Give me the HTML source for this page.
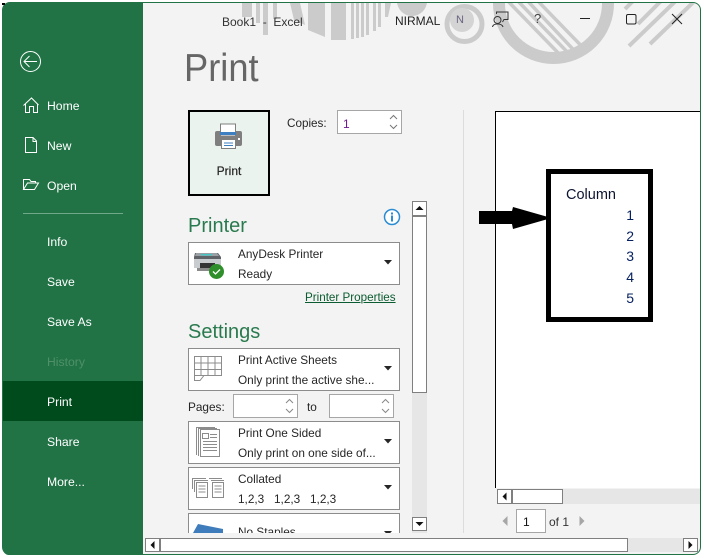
<!DOCTYPE html>
<html><head><meta charset="utf-8"><style>
html,body{margin:0;padding:0;background:#fff}
#w{position:relative;width:704px;height:558px;overflow:hidden;background:#fff;font-family:"Liberation Sans",sans-serif;font-size:11.8px;color:#262626}
#w div,#w svg{position:absolute}
.t{white-space:nowrap;line-height:16px;height:16px}
.n{color:#fff;left:47px;font-size:12.2px}
.dd{left:188px;width:210px;background:#fff;border:1px solid #8c8c8c}
.inp{background:#fff;border:1px solid #a6a6a6;box-sizing:border-box}
.sb{background:#fff;border:1px solid #7f7f7f;box-sizing:border-box}
.h{color:#2a7a4f;font-size:20px;left:188px;line-height:24px;white-space:nowrap}
</style></head><body><div id="w">
<div style="left:2px;top:2px;width:697px;height:551px;background:#f3f3f3;border:1px solid #217346;border-radius:8px;box-sizing:content-box"></div>
<div style="left:2px;top:3px;width:3px;height:2px;background:#000"></div>

<svg width="704" height="558" style="left:0;top:0" fill="none">
<defs><clipPath id="c"><path d="M3 3H692Q699 3 699 10V100H3Z"/></clipPath>
<clipPath id="i"><circle cx="553.5" cy="3.5" r="49"/></clipPath></defs>
<g clip-path="url(#c)" fill="#cbcbcb">
<rect x="242" y="3" width="10" height="14"/><rect x="256" y="3" width="4" height="20"/><rect x="263" y="3" width="5" height="32"/><rect x="273" y="3" width="4" height="16"/>
<path d="M290 3H300L305 25 294 20Z"/>
<path d="M308 3H325V37L308 30Z"/>
<rect x="331" y="3" width="15" height="37"/>
<rect x="351" y="3" width="3" height="36"/><rect x="356" y="3" width="3" height="35"/><rect x="361" y="3" width="3" height="34"/><rect x="366" y="3" width="3" height="32"/><rect x="373" y="3" width="3" height="28"/><rect x="378" y="3" width="3" height="24"/>
<path d="M385 3H391L388 17H385Z"/>
<circle cx="412" cy="1" r="15"/>
<circle cx="464.5" cy="24" r="17.5" fill="none" stroke="#cbcbcb" stroke-width="5"/>
<circle cx="462" cy="20" r="12" fill="#d4d4d4"/>
<circle cx="553.5" cy="3.5" r="54.5" fill="none" stroke="#cbcbcb" stroke-width="12"/>
<g clip-path="url(#i)" stroke="#cbcbcb" stroke-width="3.5">
<path d="M502-5L567 62M512-5L577 62M522-5L585 62M532-5L597 62"/>
</g>
<g stroke="#cbcbcb" stroke-width="4">
<path d="M629 46L685 -8M650 44L706 -10M638 24L666 -4M625 9L640 -6"/>
</g>
</g>
</svg>

<div style="left:3px;top:3px;width:140px;height:552px;background:#217346;border-radius:6px 0 0 6px"></div>
<div style="left:3px;top:381px;width:140px;height:40px;background:#004b1c"></div>
<div style="left:23px;top:213px;width:100px;height:1px;background:#6fa98a"></div>

<svg width="143" height="210" style="left:0;top:0" fill="none" stroke="#fff" stroke-width="1">
<circle cx="30.5" cy="61.5" r="10"/><path d="M24.5 61.5H37M29.5 56L24 61.5 29.5 67"/>
<path d="M23.5 105.5L31.5 98 38.5 105M25.5 104V112.5H29.5V106.5H33.5V112.5H37.5V104"/>
<path d="M25.5 137.5H33L36.5 141V152.5H25.5ZM33 137.5V141.5H36.5"/>
<path d="M23.5 189.5V179.5H29.5L31 181.5H35.5V183M23.5 189.5L27.5 183H38.5L34.5 189.5Z"/>
</svg>
<div class="t n" style="top:98px">Home</div>
<div class="t n" style="top:138px">New</div>
<div class="t n" style="top:178px">Open</div>
<div class="t n" style="top:234px">Info</div>
<div class="t n" style="top:274px">Save</div>
<div class="t n" style="top:314px">Save As</div>
<div class="t n" style="top:354px;color:#4f9069">History</div>
<div class="t n" style="top:394px">Print</div>
<div class="t n" style="top:434px">Share</div>
<div class="t n" style="top:474px">More...</div>

<div class="t" style="left:222px;top:14px;font-size:12px;color:#333">Book1&nbsp; -&nbsp; Excel</div>
<div class="t" style="left:395px;top:13px;font-size:12px;color:#222">NIRMAL</div>
<div class="t" style="left:456px;top:12px;font-size:11px;color:#6b6480">N</div>
<div class="t" style="left:534px;top:11px;font-size:13px;color:#444">?</div>
<svg width="704" height="40" style="left:0;top:0" fill="none" stroke="#333" stroke-width="1">
<path d="M496.5 14V12H508V19.500H504L502.500 22"/><circle cx="497.5" cy="20" r="3.5"/><path d="M492.5 27C493 23 502 23 503 27"/>
<path d="M580 18.5H590" stroke="#222"/>
<rect x="626.5" y="14.5" width="9.5" height="9.5" rx="1.5" stroke="#222"/>
<path d="M672 14L682 24M682 14L672 24" stroke="#222"/>
</svg>

<div style="left:184px;top:44px;font-size:39px;line-height:50px;color:#666;white-space:nowrap;transform:scaleX(.93);transform-origin:0 0;font-weight:normal">Print</div>

<div style="left:188px;top:110px;width:82px;height:86px;box-sizing:border-box;border:2px solid #000;background:#ebf3ee"></div>
<svg width="32" height="28" style="left:214px;top:123px">
<rect x="1" y="8" width="27" height="15" rx="2" fill="#7f7f7f"/>
<rect x="6.500" y="1" width="15" height="12" fill="#fff" stroke="#7f7f7f"/>
<rect x="6" y="9" width="16" height="3" fill="#3e7fc1"/>
<rect x="7.500" y="16.500" width="14" height="9" fill="#fff" stroke="#7f7f7f"/>
<path d="M10 20H19M10 22.500H19" stroke="#3e7fc1"/>
<rect x="24" y="15" width="2" height="2" fill="#fff"/>
</svg>
<div class="t" style="left:188px;width:82px;text-align:center;top:163px;font-size:12px;-webkit-text-stroke:.2px #222">Print</div>

<div class="t" style="left:287px;top:116px;font-size:11.7px">Copies:</div>
<div class="inp" style="left:337px;top:110px;width:65px;height:24px"></div>
<div class="t" style="left:343px;top:116px;font-size:12px;color:#6b1b8f">1</div>
<svg width="12" height="20" style="left:388px;top:112px" fill="none" stroke="#777"><path d="M2 7L5.500 3.500 9 7M2 13L5.500 16.500 9 13"/></svg>

<div style="left:463px;top:110px;width:1px;height:425px;background:#dcdcdc"></div>

<div class="h" style="top:214px">Printer</div>
<svg width="18" height="18" style="left:383px;top:208px"><circle cx="9" cy="9" r="7.500" fill="#fff" stroke="#2a8dd4" stroke-width="1.500"/><rect x="8" y="7.500" width="2" height="6" fill="#2a8dd4"/><rect x="8" y="4.500" width="2" height="2" fill="#2a8dd4"/></svg>

<div class="dd" style="top:242px;height:41px"></div>
<svg width="34" height="30" style="left:192px;top:250px">
<path d="M3 3H26L29 7V18H2V7Z" fill="#5f6266"/><path d="M4 3H25L27 6H3Z" fill="#9aa0a4"/><rect x="9" y="4" width="11" height="1.500" fill="#45c4c4"/>
<rect x="2" y="9" width="27" height="9" fill="#c9cccf"/><rect x="8" y="13" width="15" height="5" fill="#333"/><rect x="5" y="18" width="20" height="3" fill="#8a8a8a"/>
<circle cx="24.500" cy="21.500" r="7.500" fill="#2f8f2b"/><path d="M21 21.500L23.500 24 28 19.500" fill="none" stroke="#fff" stroke-width="1.300"/>
</svg>
<div class="t" style="left:238px;top:246px">AnyDesk Printer</div>
<div class="t" style="left:238px;top:266px">Ready</div>
<svg width="9" height="5" style="left:384px;top:260px"><path d="M0 0H8L4 4.500Z" fill="#262626"/></svg>
<div class="t" style="left:305px;top:290px;font-size:11.65px;color:#0b5c30;text-decoration:underline">Printer Properties</div>

<div class="h" style="top:320px">Settings</div>

<div class="dd" style="top:348px;height:41px"></div>
<svg width="30" height="30" style="left:193px;top:355px" fill="none" stroke="#8c8c8c"><path d="M1.500 1.500H28.500V20.500H11L7 25.500H1.500ZM1.500 8H28.500M1.500 14.500H28.500M1.500 20.500H11M8 1.500V20M15 1.500V20.500M22 1.500V20.500"/></svg>
<div class="t" style="left:238px;top:352px">Print Active Sheets</div>
<div class="t" style="left:238px;top:372px">Only print the active she...</div>
<svg width="9" height="5" style="left:384px;top:366px"><path d="M0 0H8L4 4.500Z" fill="#262626"/></svg>

<div class="t" style="left:188px;top:399px">Pages:</div>
<div class="inp" style="left:233px;top:394px;width:65px;height:24px"></div>
<svg width="12" height="20" style="left:284px;top:396px" fill="none" stroke="#888"><path d="M2 7L5.500 3.500 9 7M2 13L5.500 16.500 9 13"/></svg>
<div class="t" style="left:307px;top:399px">to</div>
<div class="inp" style="left:329px;top:394px;width:65px;height:24px"></div>
<svg width="12" height="20" style="left:380px;top:396px" fill="none" stroke="#888"><path d="M2 7L5.500 3.500 9 7M2 13L5.500 16.500 9 13"/></svg>

<div class="dd" style="top:421px;height:41px"></div>
<svg width="30" height="32" style="left:195px;top:426px" fill="none" stroke="#8c8c8c"><path d="M1.500 29V1.500H20M3.500 30V2.500H22"/><rect x="5.500" y="3.500" width="19" height="27" fill="#fff"/><rect x="7.500" y="7.500" width="6" height="5"/><path d="M15 8.500H22M15 11.500H22M8 15.500H22M8 18.500H22M8 21.500H22M8 24.500H22"/></svg>
<div class="t" style="left:238px;top:425px">Print One Sided</div>
<div class="t" style="left:238px;top:445px">Only print on one side of...</div>
<svg width="9" height="5" style="left:384px;top:439px"><path d="M0 0H8L4 4.500Z" fill="#262626"/></svg>

<div class="dd" style="top:467px;height:41px"></div>
<svg width="36" height="26" style="left:191px;top:476px" fill="none" stroke="#8c8c8c"><path d="M1.500 13V2.500H15M3.500 16V4.500H17"/><rect x="5.500" y="6.500" width="11" height="15" fill="#fff"/><path d="M7.500 10H14.500M7.500 13H14.500M7.500 16H14.500"/><path d="M18.500 3V2.500H31M20 4.500H33"/><rect x="21.500" y="6.500" width="11" height="15" fill="#fff"/><path d="M23.500 10H30.500M23.500 13H30.500M23.500 16H30.500"/></svg>
<div class="t" style="left:238px;top:471px">Collated</div>
<div class="t" style="left:238px;top:491px">1,2,3</div>
<div class="t" style="left:274px;top:491px">1,2,3</div>
<div class="t" style="left:310px;top:491px">1,2,3</div>
<svg width="9" height="5" style="left:384px;top:485px"><path d="M0 0H8L4 4.500Z" fill="#262626"/></svg>

<div class="dd" style="top:513px;height:30px"></div>
<svg width="34" height="10" style="left:192px;top:524px"><path d="M1 9L6 0 31 5V9Z" fill="#3f7cbc"/></svg>
<div class="t" style="left:238px;top:524px">No Staples</div>
<svg width="9" height="5" style="left:384px;top:531px"><path d="M0 0H8L4 4.500Z" fill="#262626"/></svg>

<div style="left:144px;top:533px;width:320px;height:21px;background:#f3f3f3"></div>

<div style="left:412px;top:201px;width:15px;height:332px;background:#e6e6e6"></div>
<div class="sb" style="left:412px;top:201px;width:15px;height:15px"></div>
<div class="sb" style="left:412px;top:216px;width:15px;height:177px"></div>
<div class="sb" style="left:412px;top:517px;width:15px;height:14px"></div>
<svg width="15" height="15" style="left:412px;top:201px"><path d="M3.500 9L7.500 5 11.500 9Z" fill="#111"/></svg>
<svg width="15" height="15" style="left:412px;top:517px"><path d="M3.500 5L7.500 9 11.500 5Z" fill="#111"/></svg>

<div style="left:495px;top:111px;width:205px;height:377px;background:#fff;border-left:1px solid #000;border-top:1px solid #000;box-sizing:border-box"></div>
<div style="left:546px;top:169px;width:107px;height:153px;border:5px solid #000;box-sizing:border-box;background:#fff"></div>
<div class="t" style="left:566px;top:187px;font-size:14.500px;color:#0c1530">Column</div>
<div class="t" style="left:600px;width:34px;text-align:right;top:207px;font-size:14px;color:#06205f">1</div>
<div class="t" style="left:600px;width:34px;text-align:right;top:228px;font-size:14px;color:#06205f">2</div>
<div class="t" style="left:600px;width:34px;text-align:right;top:248px;font-size:14px;color:#06205f">3</div>
<div class="t" style="left:600px;width:34px;text-align:right;top:269px;font-size:14px;color:#06205f">4</div>
<div class="t" style="left:600px;width:34px;text-align:right;top:290px;font-size:14px;color:#06205f">5</div>
<svg width="75" height="26" style="left:476px;top:205px"><path d="M3 6H36L37 2 72 12V14L37 24 36 19H3Z" fill="#000"/></svg>

<div style="left:497px;top:489px;width:203px;height:15px;background:#e6e6e6"></div>
<div class="sb" style="left:497px;top:489px;width:15px;height:15px"></div>
<div class="sb" style="left:512px;top:489px;width:51px;height:15px"></div>
<svg width="15" height="15" style="left:497px;top:489px"><path d="M9.500 3.500L5.500 7.500 9.500 11.500Z" fill="#111"/></svg>

<svg width="8" height="12" style="left:501px;top:515px"><path d="M6.500 1L1.500 6 6.500 11Z" fill="#a6a6a6"/></svg>
<div class="inp" style="left:516px;top:509px;width:30px;height:24px"></div>
<div class="t" style="left:523px;top:514px;font-size:12px;color:#111">1</div>
<div class="t" style="left:549px;top:514px;font-size:12px;color:#333">of 1</div>
<svg width="8" height="12" style="left:578px;top:515px"><path d="M1.500 1L6.500 6 1.500 11Z" fill="#a6a6a6"/></svg>

<div style="left:145px;top:538px;width:553px;height:14px;background:#e6e6e6"></div>
<div class="sb" style="left:145px;top:538px;width:15px;height:14px"></div>
<div class="sb" style="left:160px;top:538px;width:468px;height:14px"></div>
<div class="sb" style="left:683px;top:538px;width:15px;height:14px"></div>
<svg width="15" height="14" style="left:145px;top:538px"><path d="M9.500 3L5.500 7 9.500 11Z" fill="#111"/></svg>
<svg width="15" height="14" style="left:683px;top:538px"><path d="M5.500 3L9.500 7 5.500 11Z" fill="#111"/></svg>
</div></body></html>
